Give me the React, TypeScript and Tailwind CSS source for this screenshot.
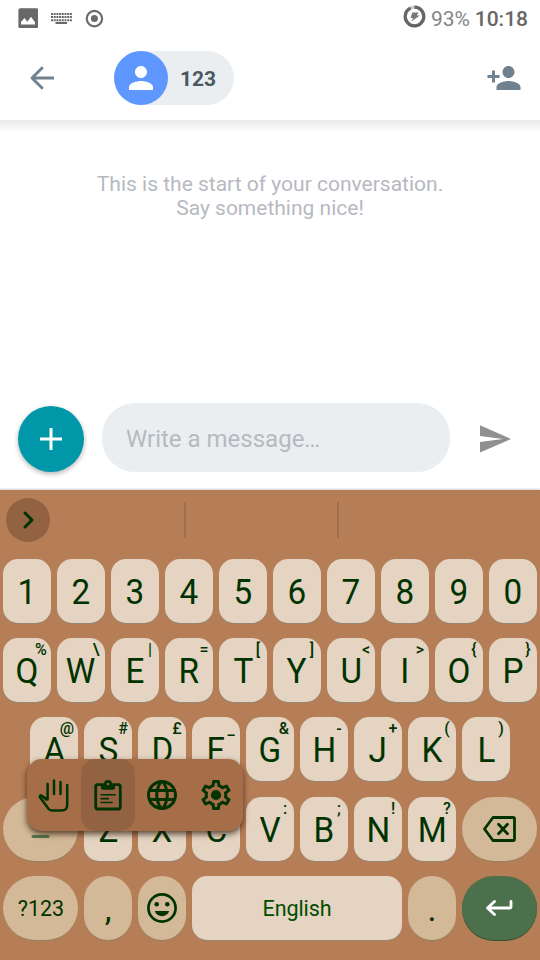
import React from "react";
import { MdPerson, MdPersonAdd, MdLanguage } from "react-icons/md";

type KeyData = { label: string; hint?: string; shift?: string };

const numbers: KeyData[] = "1234567890".split("").map((label) => ({ label }));
const rowOne: KeyData[] = [
  { label: "Q", hint: "%", shift: "translate-x-[-1px]" },
  { label: "W", hint: "\\" },
  { label: "E", hint: "|" },
  { label: "R", hint: "=" },
  { label: "T", hint: "[" },
  { label: "Y", hint: "]" },
  { label: "U", hint: "<" },
  { label: "I", hint: ">" },
  { label: "O", hint: "{" },
  { label: "P", hint: "}" },
];
const rowTwo: KeyData[] = [
  { label: "A", hint: "@", shift: "translate-x-[-2px]" },
  { label: "S", hint: "#" },
  { label: "D", hint: "£" },
  { label: "F", hint: "_" },
  { label: "G", hint: "&", shift: "translate-x-[-1px]" },
  { label: "H", hint: "-" },
  { label: "J", hint: "+" },
  { label: "K", hint: "(" },
  { label: "L", hint: ")" },
];
const rowThree: KeyData[] = [
  { label: "Z" },
  { label: "X" },
  { label: "C" },
  { label: "V", hint: ":" },
  { label: "B", hint: ";" },
  { label: "N", hint: "!" },
  { label: "M", hint: "?" },
];

function Key({ label, hint, shift }: KeyData) {
  return (
    <div className="relative flex h-16 w-12 items-center justify-center rounded-[15px] bg-[#e4d4c1] pt-[2px] text-[35px] leading-none text-[#003300] shadow-[0_1px_0_#958673]">
      <span className="scale-x-[0.95]">{label}</span>
      {hint && (
        <span
          className={`absolute top-[4px] right-[-1px] w-5 text-center text-base leading-4 font-medium ${shift ?? ""}`}
        >
          {hint}
        </span>
      )}
    </div>
  );
}

function FnKey({ className, children }: { className: string; children: React.ReactNode }) {
  return (
    <div
      className={`flex h-16 shrink-0 items-center justify-center rounded-full text-[#003300] ${className}`}
    >
      {children}
    </div>
  );
}

const tan = "bg-[#d4b998] shadow-[0_1px_0_#95805f]";

function StatusBar() {
  return (
    <div className="flex h-9 items-center pr-3 pl-[18px] text-[#666666]">
      <svg width="20" height="20" viewBox="0 0 20 20">
        <rect width="20" height="20" x="0.4" y="0.2" rx="2" fill="#686868" />
        <path d="M3 16.4V14l3.5-4 2.8 3.7L13 8.8l4 5.4v2.2z" fill="#fff" />
      </svg>
      <svg className="ml-[13px]" width="21" height="14" viewBox="0 0 21 14">
        <g stroke="#686868" strokeWidth="2" strokeDasharray="2 0.7">
          <path d="M0 3H21M0 6H21M0 9.2H21" />
        </g>
        <path d="M4.500 12H16" stroke="#686868" strokeWidth="2" />
      </svg>
      <svg className="ml-[13px]" width="19" height="19" viewBox="0 0 19 19">
        <circle cx="9.4" cy="9.6" r="7.7" fill="none" stroke="#6b6b6b" strokeWidth="2.2" />
        <circle cx="9.4" cy="9.6" r="3.5" fill="#6b6b6b" />
      </svg>
      <div className="ml-auto flex items-center">
        <svg className="mr-[5px] mb-[3px]" width="23" height="23" viewBox="0 0 23 23">
          <circle cx="11.5" cy="11.5" r="9.3" fill="none" stroke="#c9c9c9" strokeWidth="3.2" />
          <circle
            cx="11.5"
            cy="11.5"
            r="9.3"
            fill="none"
            stroke="#666"
            strokeWidth="3.2"
            pathLength="100"
            strokeDasharray="93 7"
            transform="rotate(-90 11.5 11.5)"
          />
          <path d="M9.4 7.6h6.2L13.7 10.5h3.2L8.2 16.6l2-3.5H7.5z" fill="#777" />
        </svg>
        <span className="pt-[2px] text-[21px] leading-6 tracking-[-0.1px] text-[#858585]">93%</span>
        <span className="ml-[5px] pt-[2px] text-[21px] leading-6 font-medium">10:18</span>
      </div>
    </div>
  );
}

function Header() {
  return (
    <div className="flex h-[84px] items-center pr-[18px] pl-6 text-[#708290]">
      <svg width="36" height="36" viewBox="0 0 36 36" fill="none" stroke="currentColor" strokeWidth="2.9">
        <path d="M30 18H8M18.8 7.2L8 18l10.8 10.8" strokeLinejoin="round" />
      </svg>
      <div className="ml-[54px] flex h-[54px] w-[120px] items-center rounded-full bg-[#ebeef1]">
        <div className="flex size-[54px] items-center justify-center rounded-full bg-[#5e97ff]">
          <MdPerson size={36} color="#fff" />
        </div>
        <span className="ml-3 pt-px text-[21px] leading-6 font-bold tracking-[-0.1px] text-[#4a5862]">123</span>
      </div>
      <MdPersonAdd className="ml-auto" size={36} />
    </div>
  );
}

function Composer() {
  return (
    <div className="mt-auto mb-[18px] flex h-[69px] items-end pl-[18px]">
      <div className="flex size-[66px] items-center justify-center rounded-full bg-[#0097a8] shadow-[0_2px_5px_rgba(0,0,0,0.3)]">
        <svg width="22" height="22" viewBox="0 0 22 22" stroke="#fff" strokeWidth="3">
          <path d="M11 0v22M0 11h22" />
        </svg>
      </div>
      <div className="ml-[18px] flex h-[69px] w-[348px] items-center rounded-[33px] bg-[#ebeef1] pt-[3px] pl-6 text-2xl text-[#b6babf]">
        Write a message…
      </div>
      <svg className="mb-[18px] ml-[30px]" width="32" height="30" viewBox="0 0 32 30" fill="#8f9092">
        <path d="M0 1.3L31 15 0 28.5V18L23 15 0 12z" />
      </svg>
    </div>
  );
}

function Toolbox() {
  return (
    <div className="absolute top-[269px] left-[27px] flex h-[72px] w-[216px] rounded-[15px] bg-[#a56e49] text-[#003300] shadow-[0_3px_6px_rgba(40,20,5,0.75)]">
      <div className="flex w-[54px] items-center justify-center">
        <svg width="36" height="36" viewBox="0 0 36 36" fill="none" stroke="currentColor" strokeWidth="2.5" strokeLinecap="round">
          <path
            d="M11.600 7V22.500L5 18.200 3.600 19.700 12.700 32Q14 33.500 16 33.500H25.500Q31.200 33.500 31.200 28V8"
            strokeLinejoin="round"
          />
          <path d="M18 3.400V17M24.500 5V17" />
          <path d="M3.600 18.200L10.500 20.400V24.500z" fill="currentColor" stroke="none" />
        </svg>
      </div>
      <div className="flex w-[54px] items-center justify-center rounded-[15px] bg-[#926242]">
        <svg width="30" height="32" viewBox="0 0 30 32" fill="none" stroke="currentColor">
          <rect x="2.700" y="5.600" width="24.600" height="24.400" rx="2" strokeWidth="2.800" />
          <path d="M8 5h3a4 4 0 0 1 8 0h3v3.800q0 2-2 2H10q-2 0-2-2z" fill="currentColor" stroke="none" />
          <circle cx="15" cy="5" r="1.300" fill="#926242" stroke="none" />
          <path d="M8 15.700h14.200M8 19.600h7.500M8 23.500h11" strokeWidth="1.600" strokeLinecap="round" />
        </svg>
      </div>
      <div className="flex w-[54px] items-center justify-center">
        <MdLanguage size={36} />
      </div>
      <div className="flex w-[54px] items-center justify-center">
        <svg width="36" height="36" viewBox="0 0 24 24" fill="currentColor">
          <path d="M19.43 12.98c.04-.32.07-.64.07-.98 0-.34-.03-.66-.07-.98l2.11-1.65c.19-.15.24-.42.12-.64l-2-3.46a.5.5 0 0 0-.61-.22l-2.49 1c-.52-.4-1.08-.73-1.69-.98l-.38-2.65A.488.488 0 0 0 14 2h-4c-.25 0-.46.18-.49.42l-.38 2.65c-.61.25-1.17.59-1.69.98l-2.49-1a.566.566 0 0 0-.18-.03c-.17 0-.34.09-.43.25l-2 3.46c-.13.22-.07.49.12.64l2.11 1.65c-.04.32-.07.65-.07.98 0 .33.03.66.07.98l-2.11 1.65c-.19.15-.24.42-.12.64l2 3.46a.5.5 0 0 0 .61.22l2.49-1c.52.4 1.08.73 1.69.98l.38 2.65c.03.24.24.42.49.42h4c.25 0 .46-.18.49-.42l.38-2.65c.61-.25 1.17-.59 1.69-.98l2.49 1c.06.02.12.03.18.03.17 0 .34-.09.43-.25l2-3.46c.12-.22.07-.49-.12-.64l-2.11-1.65zm-1.98-1.71c.04.31.05.52.05.73 0 .21-.02.43-.05.73l-.14 1.13.89.7 1.08.84-.7 1.21-1.27-.51-1.04-.42-.9.68c-.43.32-.84.56-1.25.73l-1.06.43-.16 1.13-.2 1.35h-1.4l-.19-1.35-.16-1.13-1.06-.43c-.43-.18-.83-.41-1.23-.71l-.91-.7-1.06.43-1.27.51-.7-1.21 1.08-.84.89-.7-.14-1.13c-.03-.31-.05-.54-.05-.74s.02-.43.05-.73l.14-1.13-.89-.7-1.08-.84.7-1.21 1.27.51 1.04.42.9-.68c.43-.32.84-.56 1.25-.73l1.06-.43.16-1.13.2-1.35h1.39l.19 1.35.16 1.13 1.06.43c.43.18.83.41 1.23.71l.91.7 1.06-.43 1.27-.51.7 1.21-1.07.85-.89.7.14 1.13z" />
          <circle cx="12" cy="12" r="3.4" />
        </svg>
      </div>
    </div>
  );
}

function Keyboard() {
  return (
    <div className="relative h-[470px] bg-[#b67e57] shadow-[0_-1px_2px_rgba(0,0,0,0.2)]">
      <div className="flex h-[60px] items-center pl-[6px]">
        <div className="flex size-11 items-center justify-center rounded-full bg-[#926242]">
          <svg width="20" height="20" viewBox="0 0 20 20" fill="none" stroke="#003300" strokeWidth="3" strokeLinecap="round" strokeLinejoin="round">
            <path d="M7 3l7 7-7 7" />
          </svg>
        </div>
        <div className="ml-[134px] h-9 w-[2px] bg-[#9e6f4e]" />
        <div className="ml-[151px] h-9 w-[2px] bg-[#9e6f4e]" />
      </div>
      <div className="flex flex-col gap-[15px] px-[3px] pt-[9px]">
        <div className="flex gap-[6px]">
          {numbers.map((k) => (
            <Key key={k.label} {...k} />
          ))}
        </div>
        <div className="flex gap-[6px]">
          {rowOne.map((k) => (
            <Key key={k.label} {...k} />
          ))}
        </div>
        <div className="flex justify-center gap-[6px]">
          {rowTwo.map((k) => (
            <Key key={k.label} {...k} />
          ))}
        </div>
        <div className="mt-px flex gap-[6px]">
          <FnKey className={`w-[75px] ${tan}`}>
            <svg width="36" height="36" viewBox="0 0 36 36" fill="none" stroke="#537851" strokeWidth="3" strokeLinecap="round" strokeLinejoin="round">
              <path d="M10 14L18 6l8 8" />
              <path d="M10 25.500h15" />
            </svg>
          </FnKey>
          {rowThree.map((k) => (
            <Key key={k.label} {...k} />
          ))}
          <FnKey className={`w-[75px] ${tan}`}>
            <svg width="36" height="28" viewBox="0 0 36 28" fill="none" stroke="currentColor" strokeWidth="2.8" strokeLinecap="round" strokeLinejoin="round">
              <path d="M11 2.5h20q1.500 0 1.500 1.500v20q0 1.500-1.500 1.500H11L2.500 14z" />
              <path d="M16.500 9.200l9 9.600M25.500 9.200L16.500 18.800" />
            </svg>
          </FnKey>
        </div>
        <div className="flex gap-[6px]">
          <FnKey className={`w-[75px] pt-[3px] pl-px text-[21.5px] ${tan}`}>?123</FnKey>
          <FnKey className={`w-12 pt-[3px] text-[34px] ${tan}`}>,</FnKey>
          <FnKey className={`w-12 ${tan}`}>
            <svg width="30" height="30" viewBox="0 0 30 30">
              <circle cx="15" cy="15" r="13.600" fill="none" stroke="currentColor" strokeWidth="2.700" />
              <circle cx="9.700" cy="11.300" r="2.300" fill="currentColor" />
              <circle cx="20.300" cy="11.300" r="2.300" fill="currentColor" />
              <path d="M7.800 18h14.400c-1 3.300-3.900 5.200-7.200 5.200S8.800 21.300 7.800 18z" fill="currentColor" />
            </svg>
          </FnKey>
          <div className="flex h-16 w-[210px] items-center justify-center rounded-[15px] bg-[#e4d4c1] pt-[2px] text-[21.5px] tracking-[-0.1px] text-[#004d00] shadow-[0_1px_0_#958673]">
            English
          </div>
          <FnKey className={`w-12 pt-[3px] text-[34px] ${tan}`}>.</FnKey>
          <FnKey className="w-[75px] bg-[#4b704b] shadow-[0_1px_0_#31502f]">
            <svg width="30" height="20" viewBox="0 0 30 20" fill="none" stroke="#fff" strokeWidth="2.800" strokeLinecap="round" strokeLinejoin="round">
              <path d="M26 3.500v5q0 1.500-1.500 1.500H3M9.500 3.500L2.500 10l7 6.500" />
            </svg>
          </FnKey>
        </div>
      </div>
      <Toolbox />
    </div>
  );
}

export default function App() {
  return (
    <div className="flex h-[960px] w-[540px] flex-col overflow-hidden bg-white font-['Roboto',sans-serif]">
      <div className="h-[120px] shrink-0">
        <StatusBar />
        <Header />
      </div>
      <div className="flex h-[370px] shrink-0 flex-col">
        <div className="h-[12px] bg-linear-to-b from-[#e9e9e9] to-white" />
        <div className="mt-[40px] text-center text-[21px] leading-6 text-[#b7b9c1]">
          This is the start of your conversation.
          <br />
          Say something nice!
        </div>
        <Composer />
      </div>
      <Keyboard />
    </div>
  );
}
